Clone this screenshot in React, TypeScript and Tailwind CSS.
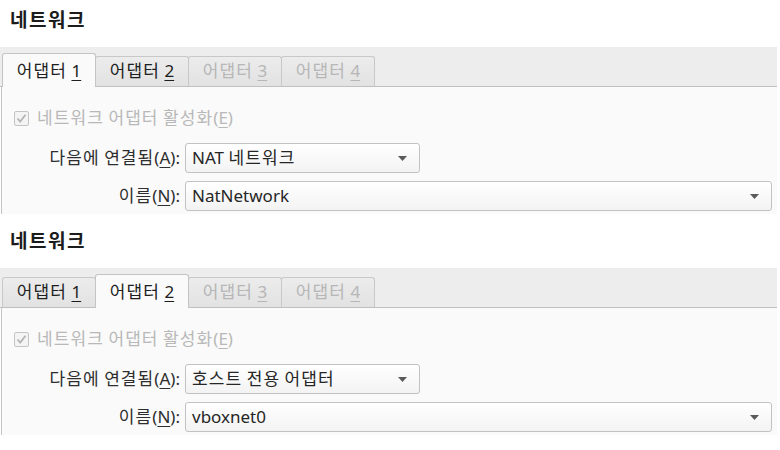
import React from 'react';

const FONT = { fontFamily: '"Noto Sans", "Noto Sans CJK KR", sans-serif' };

// 한글 구간만 자간을 조금 넓힌다
function K({ text }: { text: string }) {
  const parts = text.split(/([가-힣]+)/);
  return (
    <>
      {parts.map((p, i) =>
        /[가-힣]/.test(p) ? (
          <span key={i} className="tracking-[1.1px]">
            {p}
          </span>
        ) : (
          <React.Fragment key={i}>{p}</React.Fragment>
        )
      )}
    </>
  );
}

interface NetworkSectionProps {
  activeTab: number;
  attachedTo: string;
  name: string;
  headingClass: string;
}

function Checkbox() {
  return (
    <svg width="15" height="15" viewBox="0 0 15 15" className="shrink-0">
      <rect x="0.5" y="0.5" width="14" height="14" rx="1.5" fill="#f4f4f4" stroke="#c4c4c4" />
      <path d="M3.5 7.5 L6.2 10.5 L11.5 3.8" fill="none" stroke="#b4b4b4" strokeWidth="1.8" />
    </svg>
  );
}

function ComboBox({ value, width }: { value: string; width: string }) {
  return (
    <div
      className={`${width} h-[30px] flex items-center justify-between pl-[6px] pr-[12px] rounded-[3px] border border-[#c2c2c2] bg-gradient-to-b from-[#ffffff] to-[#f3f3f3] text-[17px] text-[#262626]`}
    >
      <span>
        <K text={value} />
      </span>
      <svg width="9" height="5" viewBox="0 0 9 5">
        <path d="M0 0 L9 0 L4.5 5 Z" fill="#5a5a5a" />
      </svg>
    </div>
  );
}

function NetworkSection({ activeTab, attachedTo, name, headingClass }: NetworkSectionProps) {
  const tabs = [1, 2, 3, 4];

  return (
    <div className="w-[777px]">
      {/* 제목 */}
      <div className={`${headingClass} pl-[10px] text-[19px] leading-[26px] tracking-[1.5px] font-bold text-[#1c1c1c]`}>
        네트워크
      </div>

      {/* 탭 바 */}
      <div className="h-[40px] bg-[#ededed] border-b border-[#c0c0c0] flex items-end pl-[2px]">
        {tabs.map((n) => {
          const active = n === activeTab;
          const disabled = n > 2;
          return (
            <div
              key={n}
              className={
                active
                  ? 'relative z-10 -mb-px -mr-px w-[94px] h-[34px] flex items-center justify-center rounded-t-[3px] border border-b-0 border-[#c4c4c4] bg-[#fafafa] text-[#1e1e1e]'
                  : `-mr-px w-[94px] h-[30px] flex items-center justify-center pb-[1px] rounded-t-[3px] border border-b-0 border-[#c8c8c8] bg-gradient-to-b from-[#ececec] to-[#e2e2e2] ${
                      disabled ? 'text-[#b6b6b6]' : 'text-[#1e1e1e]'
                    }`
              }
            >
              <span className={`text-[17px] ${active ? 'mt-[1px]' : ''}`}>
                <span className="tracking-[1.1px]">어댑터</span> <span className="underline underline-offset-[3px]">{n}</span>
              </span>
            </div>
          );
        })}
      </div>

      {/* 내용 */}
      <div className="ml-px border-l border-[#c4c4c4] bg-[#fafafa] pt-[22px] pb-[3px]">
        <div className="flex items-center gap-[8px] pl-[12px] h-[18px] text-[17px] text-[#b8b8b8]">
          <Checkbox />
          <span>
            <K text="네트워크 어댑터 활성화" />(<span className="underline underline-offset-[3px]">E</span>)
          </span>
        </div>

        <div className="mt-[16px] flex items-center">
          <div className="w-[178px] text-right text-[17px] text-[#2e2e2e]">
            <K text="다음에 연결됨" />(<span className="underline underline-offset-[3px]">A</span>):
          </div>
          <div className="ml-[5px]">
            <ComboBox value={attachedTo} width="w-[235px]" />
          </div>
        </div>

        <div className="mt-[8px] flex items-center">
          <div className="w-[178px] text-right text-[17px] text-[#2e2e2e]">
            <K text="이름" />(<span className="underline underline-offset-[3px]">N</span>):
          </div>
          <div className="ml-[5px]">
            <ComboBox value={name} width="w-[587px]" />
          </div>
        </div>
      </div>
    </div>
  );
}

export default function App() {
  return (
    <div className="w-[780px] h-[450px] bg-white overflow-hidden" style={FONT}>
      <NetworkSection
        activeTab={1}
        attachedTo="NAT 네트워크"
        name="NatNetwork"
        headingClass="h-[47px] pt-[7px]"
      />
      <NetworkSection
        activeTab={2}
        attachedTo="호스트 전용 어댑터"
        name="vboxnet0"
        headingClass="h-[54px] pt-[14px]"
      />
    </div>
  );
}
